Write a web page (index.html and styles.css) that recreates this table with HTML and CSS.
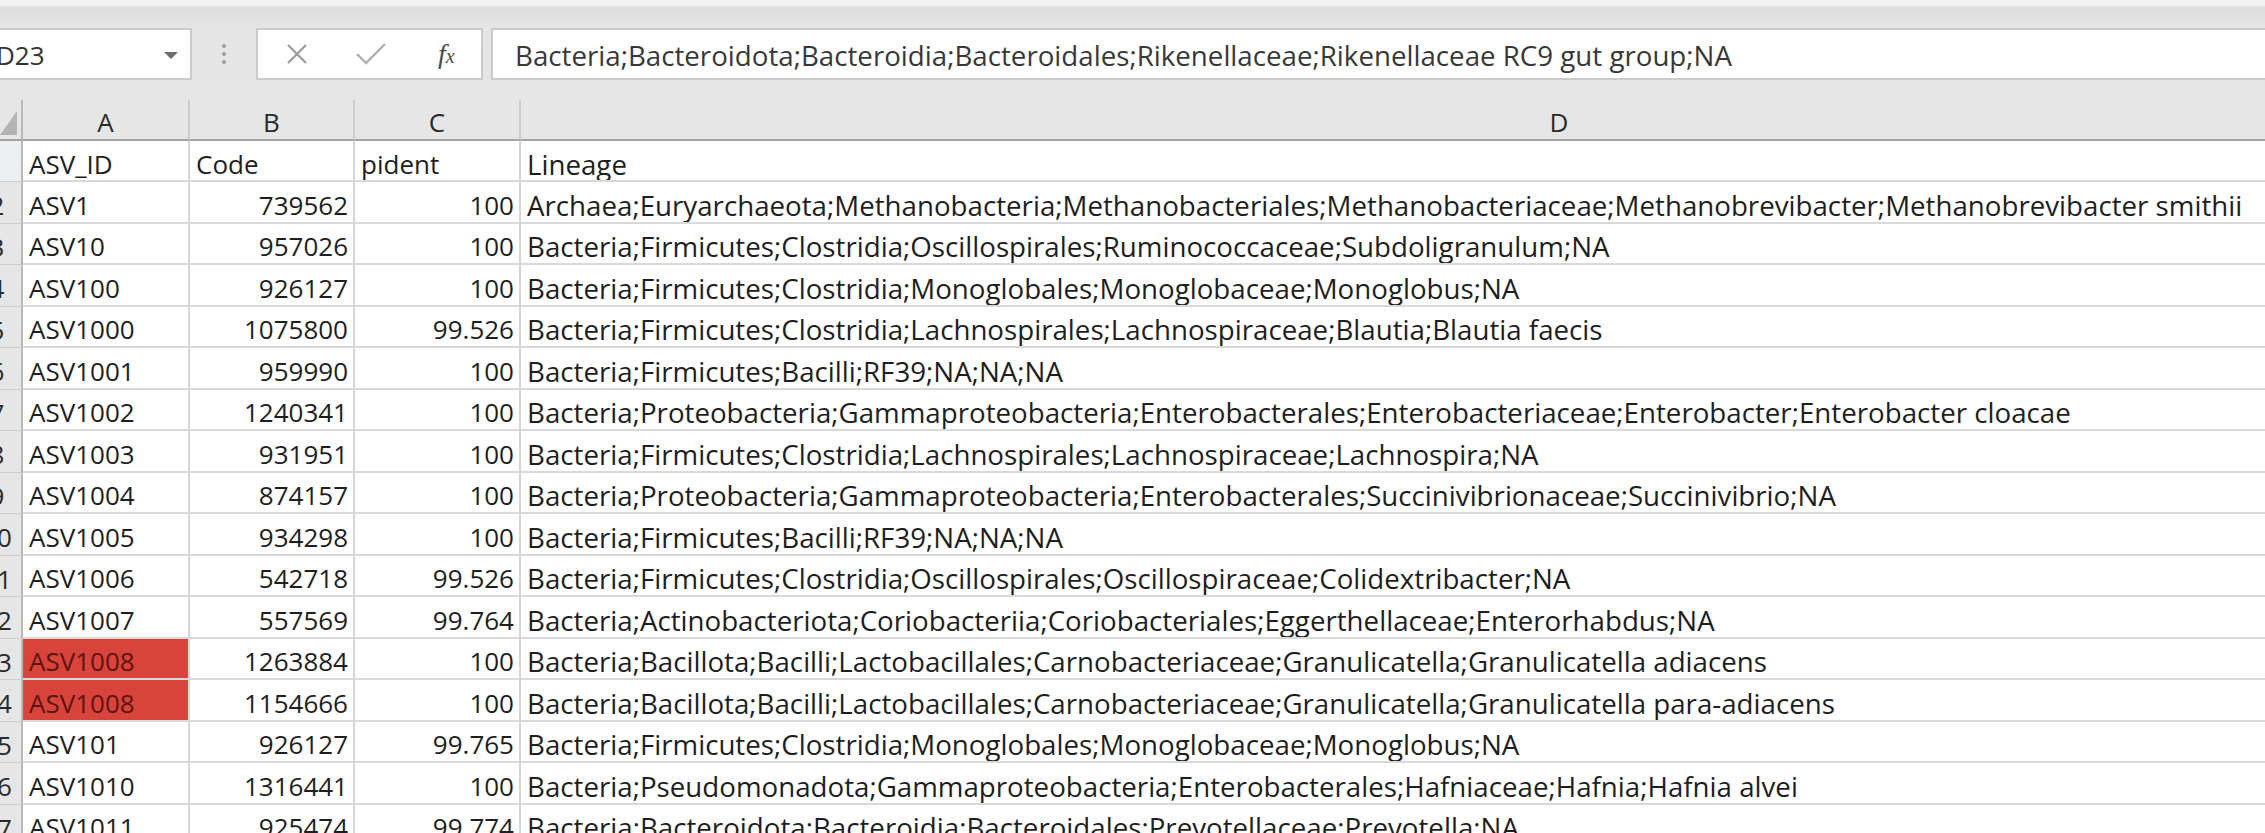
FILE: index.html
```html
<!DOCTYPE html>
<html lang="en">

<head>
    <meta charset="UTF-8" />
    <meta name="viewport" content="width=device-width, initial-scale=1.0" />
    <title>ASV lineage</title>
    <link rel="stylesheet" href="styles.css">
</head>

<body>
    <!-- barra de formulas -->
    <div class="ribbon">
        <div class="namebox">
            <span>D23</span>
            <span class="arrow"></span>
        </div>
        <div class="grip"><i></i><i></i><i></i></div>
        <div class="fxbox">
            <svg class="ico" width="26" height="26" viewBox="0 0 26 26">
                <path d="M4 4 L22 22 M22 4 L4 22" stroke="#9a9a9a" stroke-width="2.2" fill="none" />
            </svg>
            <svg class="ico" width="34" height="26" viewBox="0 0 34 26">
                <path d="M3 13 L12 22 L31 3" stroke="#b0b0b0" stroke-width="2.4" fill="none" />
            </svg>
            <span class="fx">f<small>x</small></span>
        </div>
        <div class="formula">Bacteria;Bacteroidota;Bacteroidia;Bacteroidales;Rikenellaceae;Rikenellaceae RC9 gut group;NA</div>
    </div>

    <!-- hoja -->
    <div class="sheet">
        <div class="corner"><svg width="23" height="41" viewBox="0 0 23 41"><polygon points="0,35 17,35 17,11" fill="#b3b3b3" /></svg></div>
        <div class="colhead">A</div>
        <div class="colhead">B</div>
        <div class="colhead">C</div>
        <div class="colhead">D</div>

        <div class="rowhead first"><span>1</span></div>
        <div class="cell">ASV_ID</div>
        <div class="cell">Code</div>
        <div class="cell">pident</div>
        <div class="cell">Lineage</div>

        <div class="rowhead"><span>2</span></div>
        <div class="cell">ASV1</div>
        <div class="cell num">739562</div>
        <div class="cell num">100</div>
        <div class="cell">Archaea;Euryarchaeota;Methanobacteria;Methanobacteriales;Methanobacteriaceae;Methanobrevibacter;Methanobrevibacter smithii</div>

        <div class="rowhead"><span>3</span></div>
        <div class="cell">ASV10</div>
        <div class="cell num">957026</div>
        <div class="cell num">100</div>
        <div class="cell">Bacteria;Firmicutes;Clostridia;Oscillospirales;Ruminococcaceae;Subdoligranulum;NA</div>

        <div class="rowhead"><span>4</span></div>
        <div class="cell">ASV100</div>
        <div class="cell num">926127</div>
        <div class="cell num">100</div>
        <div class="cell">Bacteria;Firmicutes;Clostridia;Monoglobales;Monoglobaceae;Monoglobus;NA</div>

        <div class="rowhead"><span>5</span></div>
        <div class="cell">ASV1000</div>
        <div class="cell num">1075800</div>
        <div class="cell num">99.526</div>
        <div class="cell">Bacteria;Firmicutes;Clostridia;Lachnospirales;Lachnospiraceae;Blautia;Blautia faecis</div>

        <div class="rowhead"><span>6</span></div>
        <div class="cell">ASV1001</div>
        <div class="cell num">959990</div>
        <div class="cell num">100</div>
        <div class="cell">Bacteria;Firmicutes;Bacilli;RF39;NA;NA;NA</div>

        <div class="rowhead"><span>7</span></div>
        <div class="cell">ASV1002</div>
        <div class="cell num">1240341</div>
        <div class="cell num">100</div>
        <div class="cell">Bacteria;Proteobacteria;Gammaproteobacteria;Enterobacterales;Enterobacteriaceae;Enterobacter;Enterobacter cloacae</div>

        <div class="rowhead"><span>8</span></div>
        <div class="cell">ASV1003</div>
        <div class="cell num">931951</div>
        <div class="cell num">100</div>
        <div class="cell">Bacteria;Firmicutes;Clostridia;Lachnospirales;Lachnospiraceae;Lachnospira;NA</div>

        <div class="rowhead"><span>9</span></div>
        <div class="cell">ASV1004</div>
        <div class="cell num">874157</div>
        <div class="cell num">100</div>
        <div class="cell">Bacteria;Proteobacteria;Gammaproteobacteria;Enterobacterales;Succinivibrionaceae;Succinivibrio;NA</div>

        <div class="rowhead"><span>10</span></div>
        <div class="cell">ASV1005</div>
        <div class="cell num">934298</div>
        <div class="cell num">100</div>
        <div class="cell">Bacteria;Firmicutes;Bacilli;RF39;NA;NA;NA</div>

        <div class="rowhead"><span>11</span></div>
        <div class="cell">ASV1006</div>
        <div class="cell num">542718</div>
        <div class="cell num">99.526</div>
        <div class="cell">Bacteria;Firmicutes;Clostridia;Oscillospirales;Oscillospiraceae;Colidextribacter;NA</div>

        <div class="rowhead"><span>12</span></div>
        <div class="cell">ASV1007</div>
        <div class="cell num">557569</div>
        <div class="cell num">99.764</div>
        <div class="cell">Bacteria;Actinobacteriota;Coriobacteriia;Coriobacteriales;Eggerthellaceae;Enterorhabdus;NA</div>

        <div class="rowhead"><span>13</span></div>
        <div class="cell dup">ASV1008</div>
        <div class="cell num">1263884</div>
        <div class="cell num">100</div>
        <div class="cell">Bacteria;Bacillota;Bacilli;Lactobacillales;Carnobacteriaceae;Granulicatella;Granulicatella adiacens</div>

        <div class="rowhead"><span>14</span></div>
        <div class="cell dup">ASV1008</div>
        <div class="cell num">1154666</div>
        <div class="cell num">100</div>
        <div class="cell">Bacteria;Bacillota;Bacilli;Lactobacillales;Carnobacteriaceae;Granulicatella;Granulicatella para-adiacens</div>

        <div class="rowhead"><span>15</span></div>
        <div class="cell">ASV101</div>
        <div class="cell num">926127</div>
        <div class="cell num">99.765</div>
        <div class="cell">Bacteria;Firmicutes;Clostridia;Monoglobales;Monoglobaceae;Monoglobus;NA</div>

        <div class="rowhead"><span>16</span></div>
        <div class="cell">ASV1010</div>
        <div class="cell num">1316441</div>
        <div class="cell num">100</div>
        <div class="cell">Bacteria;Pseudomonadota;Gammaproteobacteria;Enterobacterales;Hafniaceae;Hafnia;Hafnia alvei</div>

        <div class="rowhead"><span>17</span></div>
        <div class="cell">ASV1011</div>
        <div class="cell num">925474</div>
        <div class="cell num">99.774</div>
        <div class="cell">Bacteria;Bacteroidota;Bacteroidia;Bacteroidales;Prevotellaceae;Prevotella;NA</div>
    </div>
</body>

</html>
```

FILE: styles.css
```css
* {
    box-sizing: border-box;
    margin: 0;
    padding: 0;
}

body {
    width: 2265px;
    height: 833px;
    overflow: hidden;
    background-color: #fff;
    font-family: "Open Sans", "Liberation Sans", sans-serif;
    font-size: 26px;
    color: #1e1e1e;
}

/* barra superior */
.ribbon {
    height: 100px;
    padding-top: 28px;
    display: flex;
    align-items: flex-start;
    background: linear-gradient(#f3f3f3 0, #f3f3f3 5px, #dcdcdc 8px, #e4e4e4 24px, #e6e6e6 100%);
}

.namebox {
    margin-left: -12px;
    width: 204px;
    height: 52px;
    padding-left: 6px;
    padding-right: 12px;
    padding-top: 2px;
    display: flex;
    align-items: center;
    justify-content: space-between;
    background-color: #fff;
    border: 2px solid #cbcbcb;
    color: #333;
}

.arrow {
    width: 0;
    height: 0;
    border-left: 7px solid transparent;
    border-right: 7px solid transparent;
    border-top: 7px solid #6d6d6d;
}

.grip {
    width: 64px;
    height: 52px;
    display: flex;
    flex-direction: column;
    align-items: center;
    justify-content: center;
    gap: 4px;
}

.grip i {
    width: 4px;
    height: 4px;
    border-radius: 50%;
    background-color: #9a9a9a;
}

.fxbox {
    width: 227px;
    height: 52px;
    display: flex;
    align-items: center;
    padding-left: 26px;
    background-color: #fff;
    border: 2px solid #cbcbcb;
}

.ico {
    margin-right: 44px;
}

.ico + .ico {
    margin-right: 50px;
}

.fx {
    font-family: "Liberation Serif", serif;
    font-style: italic;
    font-size: 28px;
    color: #4a4a4a;
}

.fx small {
    font-size: 20px;
}

.formula {
    margin-left: 8px;
    margin-right: -10px;
    flex-grow: 1;
    height: 52px;
    padding-left: 22px;
    padding-top: 2px;
    display: flex;
    align-items: center;
    background-color: #fff;
    border: 2px solid #cbcbcb;
    font-size: 27.7px;
    color: #383838;
    white-space: nowrap;
}

/* rejilla */
.sheet {
    display: grid;
    grid-template-columns: 23px 167px 165px 166px 2078px;
    grid-template-rows: 41px 41px;
    grid-auto-rows: 41.5px;
}

.corner {
    background-color: #e6e6e6;
    border-right: 2px solid #b9b9b9;
    border-bottom: 2px solid #a3a3a3;
    overflow: hidden;
}

.colhead {
    display: flex;
    align-items: center;
    justify-content: center;
    padding-top: 4px;
    background-color: #e6e6e6;
    border-bottom: 2px solid #a3a3a3;
    border-right: 2px solid #cdcdcd;
    color: #2a2a2a;
}

.rowhead {
    overflow: hidden;
    display: flex;
    align-items: center;
    padding-top: 6px;
    background-color: #e6e6e6;
    border-right: 2px solid #b9b9b9;
    border-bottom: 1px solid #cfcfcf;
    color: #2a2a2a;
}

.rowhead span {
    flex-shrink: 0;
    width: 52px;
    margin-left: -29px;
    text-align: center;
}

.rowhead.first {
    background-color: #edf0f3;
}

.cell {
    display: flex;
    align-items: center;
    padding: 6px 5px 0 6px;
    white-space: nowrap;
    overflow: hidden;
    border-right: 2px solid #d6d6d6;
    border-bottom: 2px solid #d9d9d9;
}

/* columna D: texto largo */
.cell:nth-child(5n) {
    font-size: 27.7px;
}

.num {
    justify-content: flex-end;
}

.dup {
    background-color: #d8433b;
    color: #5e1410;
}
```
